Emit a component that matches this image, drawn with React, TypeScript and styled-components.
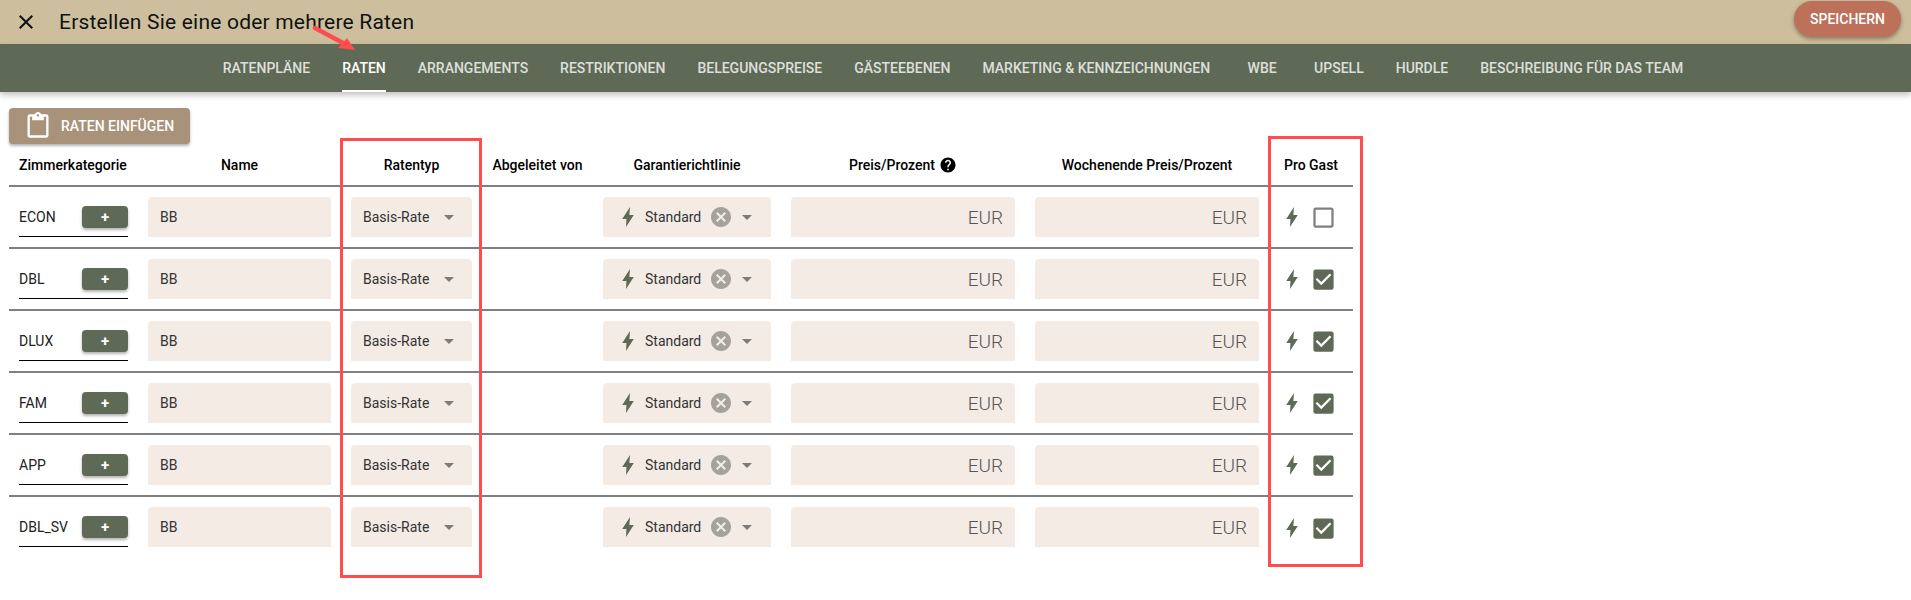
import React from 'react';
import styled, { createGlobalStyle } from 'styled-components';
import {
	MdArrowDropDown,
	MdCancel,
	MdCheckBox,
	MdCheckBoxOutlineBlank,
	MdClose,
	MdContentPaste,
	MdHelp,
} from 'react-icons/md';

const GlobalStyle = createGlobalStyle`
	html, body {
		margin: 0;
		padding: 0;
		background: #fff;
		font-family: Roboto, "Liberation Sans", sans-serif;
		overflow: hidden;
	}
`;

const Page = styled.div`
	position: relative;
	width: 1911px;
	height: 600px;
	overflow: hidden;
`;

const TopBar = styled.header`
	height: 44px;
	background: #cdbf9d;
	display: flex;
	align-items: center;
	justify-content: space-between;
	padding: 0 10px 0 14px;
	box-sizing: border-box;
`;

const TitleGroup = styled.div`
	display: flex;
	align-items: center;
	gap: 21px;
	color: #111;
`;

const Title = styled.h1`
	margin: 0;
	font-size: 21px;
	font-weight: 400;
	letter-spacing: 0.2px;
	color: #111;
`;

const SaveButton = styled.button`
	width: 107px;
	height: 36px;
	margin-top: -6px;
	border: 0;
	border-radius: 18px;
	background: #bd705a;
	color: #fff;
	font: 500 14px Roboto, sans-serif;
	box-shadow: 0 2px 4px rgba(0, 0, 0, 0.35);
`;

const Nav = styled.nav`
	height: 48px;
	padding-right: 5px;
	background: #5f6a56;
	display: flex;
	justify-content: center;
	box-shadow: 0 3px 6px rgba(0, 0, 0, 0.25);
	position: relative;
`;

const Tab = styled.div<{ $active?: boolean }>`
	min-width: 72px;
	padding: 0 16px;
	box-sizing: border-box;
	position: relative;
	display: flex;
	align-items: center;
	justify-content: center;
	font-size: 14px;
	font-weight: 500;
	color: ${(p) => (p.$active ? '#fff' : 'rgba(255, 255, 255, 0.8)')};

	&::after {
		content: '';
		display: ${(p) => (p.$active ? 'block' : 'none')};
		position: absolute;
		left: 16px;
		right: 16px;
		bottom: 0;
		height: 2px;
		background: #fff;
	}
`;

const Content = styled.main`
	padding: 16px 0 0 9px;
`;

const PasteButton = styled.button`
	width: 181px;
	height: 36px;
	display: flex;
	align-items: center;
	gap: 9px;
	padding: 0 0 0 15px;
	box-sizing: border-box;
	border: 0;
	border-radius: 4px;
	background: #a8927a;
	color: #fff;
	font: 500 14px Roboto, sans-serif;
	box-shadow: 0 2px 3px rgba(0, 0, 0, 0.3);
`;

const Table = styled.div`
	width: 1344px;
`;

const gridColumns = '129px 203px 141px 111px 188px 244px 244px 84px';

const HeaderRow = styled.div`
	display: grid;
	grid-template-columns: ${gridColumns};
	height: 43px;
	box-sizing: border-box;
	border-bottom: 2px solid #808080;
`;

const HeaderCell = styled.div<{ $left?: boolean }>`
	display: flex;
	align-items: center;
	justify-content: ${(p) => (p.$left ? 'flex-start' : 'center')};
	gap: 4px;
	padding-left: ${(p) => (p.$left ? '10px' : '0')};
	font-size: 14px;
	font-weight: 500;
	color: #000;
`;

const Row = styled.div`
	display: grid;
	grid-template-columns: ${gridColumns};
	height: 62px;
	box-sizing: border-box;
	padding: 10px 0;
	border-bottom: 2px solid #808080;

	&:last-child {
		border-bottom: 0;
	}
`;

const CategoryCell = styled.div`
	margin: 0 10px;
	display: flex;
	align-items: center;
	justify-content: space-between;
	border-bottom: 1px solid #000;
	height: 40px;
	box-sizing: border-box;
	font-size: 14px;
	color: #222;
`;

const AddButton = styled.button`
	width: 46px;
	height: 22px;
	border: 0;
	border-radius: 4px;
	background: #5f6a56;
	color: #fff;
	font: 700 15px Roboto, sans-serif;
	padding: 0;
	box-shadow: 0 2px 3px rgba(0, 0, 0, 0.3);
`;

const Field = styled.div`
	margin: 0 10px;
	height: 40px;
	background: #f4ebe5;
	border-radius: 4px 4px 0 0;
	display: flex;
	align-items: center;
	box-sizing: border-box;
	padding: 0 12px;
	font-size: 14px;
	color: #333;
`;

const SelectField = styled(Field)`
	padding: 0 11px 0 12px;
	justify-content: space-between;

	svg {
		color: #7b7b7b;
	}
`;

const GuaranteeField = styled(Field)`
	padding: 0 12px 0 19px;
`;

const BoltSvg = styled.svg`
	flex: none;
	width: 12px;
	height: 20px;
	fill: #5f6a56;
`;

const Bolt = () => (
	<BoltSvg viewBox="0 0 11 19">
		<path d="M7.4 0 0 11.5h4L3.6 19 11 7.5H6.8z" />
	</BoltSvg>
);

const GuaranteeLabel = styled.span`
	margin-left: 11px;
	width: 64px;
`;

const ClearIcon = styled(MdCancel)`
	flex: none;
	color: #a5a29c;
`;

const DropIcon = styled(MdArrowDropDown)`
	flex: none;
	color: #7b7b7b;
	margin-left: 2px;
`;

const PriceField = styled(Field)`
	justify-content: flex-end;
	font-size: 19px;
	font-weight: 300;
	color: #555;
`;

const GuestCell = styled.div`
	display: flex;
	align-items: center;
	gap: 12px;
	padding-left: 17px;
`;

const CheckedIcon = styled(MdCheckBox)`
	color: #5f6a56;
`;

const UncheckedIcon = styled(MdCheckBoxOutlineBlank)`
	color: #7f7f7f;
`;

const Highlight = styled.div<{ $left: number; $top: number; $width: number; $height: number }>`
	position: absolute;
	left: ${(p) => p.$left}px;
	top: ${(p) => p.$top}px;
	width: ${(p) => p.$width}px;
	height: ${(p) => p.$height}px;
	box-sizing: border-box;
	border: 3px solid #ff4d4d;
	pointer-events: none;
`;

const Arrow = styled.svg`
	position: absolute;
	left: 310px;
	top: 22px;
	pointer-events: none;
`;

const tabs = [
	'RATENPLÄNE',
	'RATEN',
	'ARRANGEMENTS',
	'RESTRIKTIONEN',
	'BELEGUNGSPREISE',
	'GÄSTEEBENEN',
	'MARKETING & KENNZEICHNUNGEN',
	'WBE',
	'UPSELL',
	'HURDLE',
	'BESCHREIBUNG FÜR DAS TEAM',
];

const rooms = [
	{ code: 'ECON', perGuest: false },
	{ code: 'DBL', perGuest: true },
	{ code: 'DLUX', perGuest: true },
	{ code: 'FAM', perGuest: true },
	{ code: 'APP', perGuest: true },
	{ code: 'DBL_SV', perGuest: true },
];

const App = () => {
	return (
		<Page>
			<GlobalStyle />
			<TopBar>
				<TitleGroup>
					<MdClose size={24} />
					<Title>Erstellen Sie eine oder mehrere Raten</Title>
				</TitleGroup>
				<SaveButton>SPEICHERN</SaveButton>
			</TopBar>
			<Nav>
				{tabs.map((tab) => (
					<Tab key={tab} $active={tab === 'RATEN'}>
						{tab}
					</Tab>
				))}
			</Nav>
			<Content>
				<PasteButton>
					<MdContentPaste size={28} />
					RATEN EINFÜGEN
				</PasteButton>
				<Table>
					<HeaderRow>
						<HeaderCell $left>Zimmerkategorie</HeaderCell>
						<HeaderCell>Name</HeaderCell>
						<HeaderCell>Ratentyp</HeaderCell>
						<HeaderCell>Abgeleitet von</HeaderCell>
						<HeaderCell>Garantierichtlinie</HeaderCell>
						<HeaderCell>
							Preis/Prozent <MdHelp size={18} />
						</HeaderCell>
						<HeaderCell>Wochenende Preis/Prozent</HeaderCell>
						<HeaderCell>Pro Gast</HeaderCell>
					</HeaderRow>
					{rooms.map((room) => (
						<Row key={room.code}>
							<CategoryCell>
								{room.code}
								<AddButton>+</AddButton>
							</CategoryCell>
							<Field>BB</Field>
							<SelectField>
								Basis-Rate
								<MdArrowDropDown size={24} />
							</SelectField>
							<div />
							<GuaranteeField>
								<Bolt />
								<GuaranteeLabel>Standard</GuaranteeLabel>
								<ClearIcon size={24} />
								<DropIcon size={24} />
							</GuaranteeField>
							<PriceField>EUR</PriceField>
							<PriceField>EUR</PriceField>
							<GuestCell>
								<Bolt />
								{room.perGuest ? <CheckedIcon size={27} /> : <UncheckedIcon size={27} />}
							</GuestCell>
						</Row>
					))}
				</Table>
			</Content>
			<Highlight $left={340} $top={138} $width={142} $height={440} />
			<Highlight $left={1268} $top={136} $width={95} $height={431} />
			<Arrow width="50" height="36" viewBox="0 0 50 36">
				<path d="M5 6 L33 21" stroke="#ff4d4d" strokeWidth="4.5" strokeLinecap="round" fill="none" />
				<path d="M45 28 L28 26 L37 16 Z" fill="#ff4d4d" />
			</Arrow>
		</Page>
	);
};

export default App;
